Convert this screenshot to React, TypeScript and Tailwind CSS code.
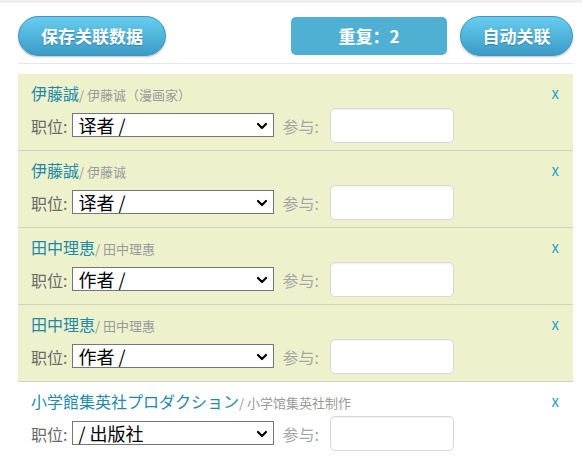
import React from 'react';

type Row = { name: string; alias: string; role: string; green: boolean };

const rows: Row[] = [
  { name: '伊藤誠', alias: '/ 伊藤诚（漫画家）', role: '译者 /', green: true },
  { name: '伊藤誠', alias: '/ 伊藤诚', role: '译者 /', green: true },
  { name: '田中理恵', alias: '/ 田中理惠', role: '作者 /', green: true },
  { name: '田中理恵', alias: '/ 田中理惠', role: '作者 /', green: true },
  { name: '小学館集英社プロダクション', alias: '/ 小学馆集英社制作', role: '/ 出版社', green: false },
];

const font = { fontFamily: '"Noto Sans CJK SC", "Liberation Sans", sans-serif' };

function PillButton({ label, width }: { label: string; width: string }) {
  return (
    <button
      type="button"
      className={`${width} h-[40px] rounded-full border border-[#3d95bd] bg-gradient-to-b from-[#67cdf0] to-[#3a9cc6] text-[17px] font-bold text-white shadow-[0_1px_2px_rgba(0,0,0,0.25)] [text-shadow:0_1px_1px_rgba(0,0,0,0.25)]`}
    >
      {label}
    </button>
  );
}

function Chevron() {
  return (
    <svg width="12" height="12" viewBox="0 0 12 12" className="pointer-events-none absolute right-[6px] top-1/2 -translate-y-1/2">
      <path d="M2 4l4 4 4-4" fill="none" stroke="#000" strokeWidth="2.2" strokeLinecap="round" strokeLinejoin="round" />
    </svg>
  );
}

export default function App() {
  return (
    <div className="min-h-[457px] w-[582px] bg-white" style={font}>
      <div className="h-[3px] bg-[#efefef]" />
      <div className="ml-[18px] w-[555px]">
        <div className="flex items-center justify-between border-b border-[#e6e6e6] pt-[13px] pb-[7px]">
          <PillButton label="保存关联数据" width="w-[148px]" />
          <div className="flex items-center gap-[13px]">
            <div className="flex h-[38px] w-[156px] items-center justify-center rounded-[5px] bg-[#4fb0d4] text-[17px] font-bold text-white">
              重复：2
            </div>
            <PillButton label="自动关联" width="w-[113px]" />
          </div>
        </div>

        <div className="mt-[10px]">
          {rows.map((row, i) => (
            <div
              key={i}
              className={`border-b pt-[9px] pb-[7px] pl-[13px] pr-[14px] ${row.green ? 'border-[#cfd3c0] bg-[#edf2cc]' : 'border-transparent bg-white'}`}
            >
              <div className="flex h-[20px] items-center justify-between">
                <div className="flex items-baseline">
                  <span className="text-[16px] text-[#2189a8]">{row.name}</span>
                  <span className="text-[13px] text-[#9a9a9a]">{row.alias}</span>
                </div>
                <span className="text-[15px] text-[#2a9fcb]">x</span>
              </div>
              <div className="mt-[5px] flex h-[35px] items-center">
                <span className="text-[16px] text-[#6a6a6a]">职位:</span>
                <div className="relative ml-[5px]">
                  <select
                    className="h-[24px] w-[202px] appearance-none border border-[#767676] bg-white pl-[5px] text-[18px] leading-[22px] text-black outline-none"
                    defaultValue={row.role}
                  >
                    <option>{row.role}</option>
                  </select>
                  <Chevron />
                </div>
                <span className="ml-[8px] text-[16px] text-[#a5a5a5]">参与:</span>
                <input
                  className="ml-[11px] h-[35px] w-[124px] rounded-[5px] border border-[#d8d8d8] bg-white shadow-[inset_0_1px_2px_rgba(0,0,0,0.06)] outline-none"
                />
              </div>
            </div>
          ))}
        </div>
      </div>
    </div>
  );
}
